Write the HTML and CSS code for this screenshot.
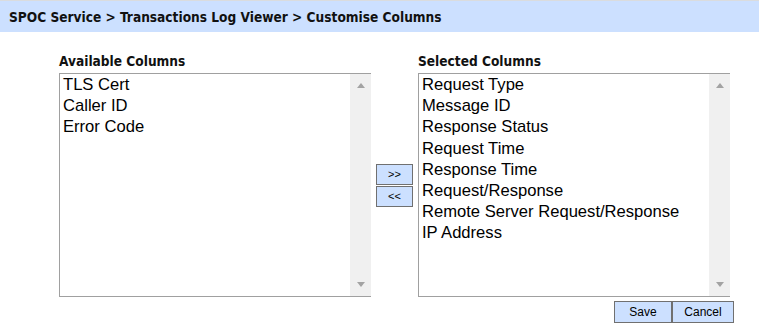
FILE: index.html
```html
<!DOCTYPE html>
<html>
<head>
<meta charset="utf-8">
<link rel="stylesheet" href="styles.css">
</head>
<body>
<header class="crumb">SPOC Service &gt; Transactions Log Viewer &gt; Customise Columns</header>
<div class="content">
  <div class="picker">
    <div class="col">
      <div class="label">Available Columns</div>
      <div class="listbox">
        <ul class="items">
          <li>TLS Cert</li>
          <li>Caller ID</li>
          <li>Error Code</li>
        </ul>
        <div class="scrollbar"><span class="arrow up"></span><span class="arrow down"></span></div>
      </div>
    </div>
    <div class="mover">
      <button class="move">&gt;&gt;</button>
      <button class="move">&lt;&lt;</button>
    </div>
    <div class="col">
      <div class="label">Selected Columns</div>
      <div class="listbox">
        <ul class="items">
          <li>Request Type</li>
          <li>Message ID</li>
          <li>Response Status</li>
          <li>Request Time</li>
          <li>Response Time</li>
          <li>Request/Response</li>
          <li>Remote Server Request/Response</li>
          <li>IP Address</li>
        </ul>
        <div class="scrollbar"><span class="arrow up"></span><span class="arrow down"></span></div>
      </div>
    </div>
  </div>
  <div class="actions">
    <button class="act save">Save</button>
    <button class="act cancel">Cancel</button>
  </div>
</div>
</body>
</html>
```
FILE: styles.css
```css
html, body {
  margin: 0;
  padding: 0;
  background: #fff;
}
.crumb {
  height: 32px;
  box-sizing: border-box;
  background: #cce0ff;
  border-top: 1px solid #dadcde;
  padding: 8px 0 0 9px;
  font-family: "DejaVu Sans Condensed", "DejaVu Sans", sans-serif;
  font-weight: bold;
  font-size: 13.6px;
  line-height: 16px;
  color: #111;
}
.content {
  margin-left: 59px;
  width: 675px;
  padding-top: 21px;
}
.picker {
  display: flex;
}
.col {
  display: flex;
  flex-direction: column;
  width: 312px;
}
.label {
  font-family: "DejaVu Sans Condensed", "DejaVu Sans", sans-serif;
  font-weight: bold;
  font-size: 13.6px;
  line-height: 16px;
  height: 20px;
  color: #111;
}
.listbox {
  display: flex;
  height: 224px;
  box-sizing: border-box;
  border: 1px solid #a0a0a0;
  border-right: none;
}
.items {
  flex: 1;
  list-style: none;
  margin: 0;
  padding: 0 0 0 3px;
  font-family: "Liberation Sans", Arial, sans-serif;
  font-size: 16.6px;
  line-height: 21.2px;
  color: #000;
}
.scrollbar {
  width: 21px;
  background: #f0f0f0;
  display: flex;
  flex-direction: column;
  justify-content: space-between;
  align-items: center;
  padding: 9px 0;
}
.arrow {
  width: 0;
  height: 0;
  border-left: 4.5px solid transparent;
  border-right: 4.5px solid transparent;
}
.arrow.up {
  border-bottom: 5px solid #a3a3a3;
}
.arrow.down {
  border-top: 5px solid #a3a3a3;
}
.mover {
  width: 47px;
  display: flex;
  flex-direction: column;
  justify-content: center;
  align-items: center;
  gap: 1px;
  padding-top: 20px;
}
.move {
  width: 37px;
  height: 21px;
  padding: 0;
  margin: 0;
  background: #cce0ff;
  border: 1px solid #707070;
  font-family: "Liberation Sans", Arial, sans-serif;
  font-size: 11px;
  color: #000;
}
.actions {
  display: flex;
  justify-content: flex-end;
  padding-top: 4px;
}
.act {
  height: 22px;
  margin: 0;
  padding: 0;
  background: #cce0ff;
  border: 1px solid #707070;
  font-family: "Liberation Sans", Arial, sans-serif;
  font-size: 12px;
  color: #000;
}
.save { width: 58px; }
.cancel { width: 62px; }
```
